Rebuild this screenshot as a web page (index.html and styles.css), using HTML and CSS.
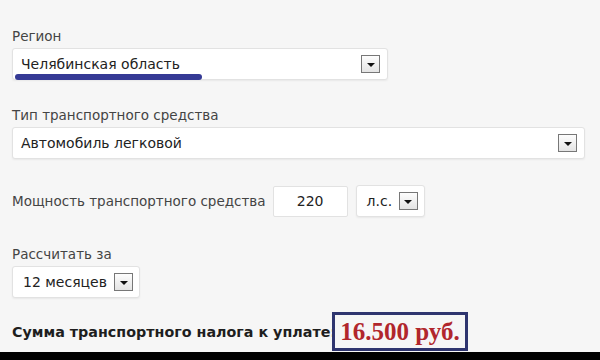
FILE: index.html
```html
<!DOCTYPE html>
<html lang="ru">
<head>
	<meta charset="UTF-8">
	<title>Транспортный налог</title>
<link rel="stylesheet" href="styles.css">
</head>
<body>
	<div class="form">
		<div class="field f-region">
			<div class="label">Регион</div>
			<div class="sel sel-region">
				<span class="val">Челябинская область</span>
				<span class="arr"></span>
				<i class="mark"></i>
			</div>
		</div>
		<div class="field f-type">
			<div class="label">Тип транспортного средства</div>
			<div class="sel sel-type">
				<span class="val">Автомобиль легковой</span>
				<span class="arr"></span>
			</div>
		</div>
		<div class="row f-power">
			<span class="label">Мощность транспортного средства</span>
			<div class="inp">220</div>
			<div class="sel sel-unit">
				<span class="val">л.с.</span>
				<span class="arr"></span>
			</div>
		</div>
		<div class="field f-period">
			<div class="label">Рассчитать за</div>
			<div class="sel sel-period">
				<span class="val">12 месяцев</span>
				<span class="arr"></span>
			</div>
		</div>
		<div class="total">
			<span class="total-text">Сумма транспортного налога к уплате:</span>
			<span class="sum">16.500 руб.</span>
		</div>
	</div>
	<div class="bar"></div>
</body>
</html>
```
FILE: styles.css
```css
html,body{
	margin:0;
	padding:0;
}
body{
	width:600px;
	height:360px;
	overflow:hidden;
	background:#f6f6f6;
	font-family:"DejaVu Sans", Verdana, sans-serif;
	color:#333;
	display:flex;
	flex-direction:column;
}
.form{
	flex:1;
	padding:28px 0 0 12px;
	display:flex;
	flex-direction:column;
}
.label{
	font-size:13.5px;
	line-height:16px;
	color:#444;
}
.field .label{
	margin-bottom:4px;
}
.sel{
	position:relative;
	display:flex;
	align-items:center;
	box-sizing:border-box;
	height:32px;
	background:#fff;
	border:1px solid #e2e2e2;
	border-radius:3px;
	box-shadow:0 1px 2px rgba(0,0,0,.06);
	padding:0 7px 0 8px;
	font-size:14px;
	color:#222;
}
.val{
	flex:1;
	white-space:nowrap;
}
.arr{
	box-sizing:border-box;
	width:19px;
	height:18px;
	border:1px solid #777;
	background:linear-gradient(#fdfdfd,#e4e4e4);
	display:flex;
	align-items:center;
	justify-content:center;
	margin-left:4px;
}
.arr:after{
	content:"";
	border-left:4px solid transparent;
	border-right:4px solid transparent;
	border-top:4px solid #111;
	margin-top:2px;
}
.sel-region{
	width:376px;
}
.mark{
	position:absolute;
	left:2px;
	top:25px;
	width:187px;
	height:6px;
	border-radius:3px;
	background:#353a95;
}
.f-type{
	margin-top:27px;
}
.sel-type{
	width:573px;
}
.f-power{
	margin-top:26px;
	display:flex;
	align-items:center;
}
.f-power .label{
	margin-right:7px;
}
.inp{
	box-sizing:border-box;
	width:75px;
	height:31px;
	background:#fff;
	border:1px solid #e2e2e2;
	border-radius:2px;
	font-size:14px;
	color:#222;
	text-align:center;
	line-height:29px;
	margin-right:8px;
}
.sel-unit{
	width:69px;
	padding:0 6px 0 10px;
}
.f-period{
	margin-top:29px;
}
.sel-period{
	width:128px;
	padding:0 6px 0 10px;
}
.total{
	margin-top:14px;
	display:flex;
	align-items:center;
}
.total-text{
	font-weight:bold;
	font-size:14.3px;
	color:#1e1e1e;
	white-space:nowrap;
}
.sum{
	box-sizing:border-box;
	height:39px;
	margin-left:-4px;
	padding:0 5px;
	border:3px solid #2f356f;
	font-family:"Liberation Serif", "Times New Roman", serif;
	font-weight:bold;
	font-size:25px;
	line-height:34px;
	color:#b1262c;
	background:#f6f6f6;
	white-space:nowrap;
}
.bar{
	height:8px;
	background:#000;
}
```
